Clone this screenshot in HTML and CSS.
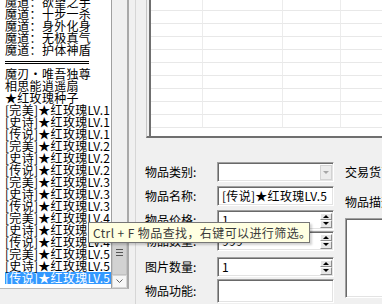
FILE: index.html
```html
<!DOCTYPE html>
<html lang="zh-CN">
<head>
<meta charset="utf-8">
<title>物品编辑</title>
<link rel="stylesheet" href="styles.css">
</head>
<body>
<div class="app">
  <div class="listbox">
    <div class="list">
      <ul class="items">
        <li>魔道：欲望之手</li>
        <li>魔道：十步一杀</li>
        <li>魔道：身外化身</li>
        <li>魔道：无极真气</li>
        <li>魔道：护体神盾</li>
        <li class="sep"><span></span></li>
        <li>魔刃・唯吾独尊</li>
        <li>相思能逍遥扇</li>
        <li>★红玫瑰种子</li>
        <li>[完美]★红玫瑰LV.1</li>
        <li>[史诗]★红玫瑰LV.1</li>
        <li>[传说]★红玫瑰LV.1</li>
        <li>[完美]★红玫瑰LV.2</li>
        <li>[史诗]★红玫瑰LV.2</li>
        <li>[传说]★红玫瑰LV.2</li>
        <li>[完美]★红玫瑰LV.3</li>
        <li>[史诗]★红玫瑰LV.3</li>
        <li>[传说]★红玫瑰LV.3</li>
        <li>[完美]★红玫瑰LV.4</li>
        <li>[史诗]★红玫瑰LV.4</li>
        <li>[传说]★红玫瑰LV.4</li>
        <li>[完美]★红玫瑰LV.5</li>
        <li>[史诗]★红玫瑰LV.5</li>
        <li class="selected">[传说]★红玫瑰LV.5</li>
      </ul>
    </div>
    <div class="vscroll">
      <div class="track"></div>
      <div class="thumb"><span class="grip"></span></div>
      <div class="arrow">
        <svg width="7" height="5" viewBox="0 0 7 5"><polyline points="0.5,0.5 3.5,3.5 6.5,0.5" fill="none" stroke="#606060" stroke-width="1"/></svg>
      </div>
    </div>
  </div>

  <div class="main">
    <div class="grid-wrap">
      <div class="grid">
        <table class="cells">
          <tr><td class="c1"></td><td class="c2"></td><td class="c3"></td><td class="c4"></td></tr>
          <tr><td></td><td></td><td></td><td></td></tr>
          <tr><td></td><td></td><td></td><td></td></tr>
          <tr><td></td><td></td><td></td><td></td></tr>
          <tr><td></td><td></td><td></td><td></td></tr>
          <tr><td></td><td></td><td></td><td></td></tr>
          <tr><td></td><td></td><td></td><td></td></tr>
          <tr><td></td><td></td><td></td><td></td></tr>
          <tr><td></td><td></td><td></td><td></td></tr>
          <tr><td></td><td></td><td></td><td></td></tr>
        </table>
      </div>
    </div>

    <div class="form">
      <div class="fields">
        <div class="row">
          <span class="label">物品类别:</span>
          <div class="field combo"><span class="drop"></span></div>
        </div>
        <div class="row">
          <span class="label">物品名称:</span>
          <div class="field"><span class="val">[传说]★红玫瑰LV.5</span></div>
        </div>
        <div class="row tight">
          <span class="label">物品价格:</span>
          <div class="field"><span class="val">1</span><span class="spin"><span class="up"></span><span class="down"></span></span></div>
        </div>
        <div class="row loose">
          <span class="label">物品数量:</span>
          <div class="field"><span class="val">999</span><span class="spin"><span class="up"></span><span class="down"></span></span></div>
        </div>
        <div class="row">
          <span class="label">图片数量:</span>
          <div class="field"><span class="val">1</span><span class="spin"><span class="up"></span><span class="down"></span></span></div>
        </div>
        <div class="row">
          <span class="label">物品功能:</span>
          <div class="field tall"></div>
        </div>
      </div>
      <div class="side">
        <div class="side-label first">交易货币:</div>
        <div class="side-label second">物品描述:</div>
        <div class="field memo"></div>
      </div>
    </div>
  </div>
</div>

<div class="tooltip">Ctrl + F 物品查找，右键可以进行筛选。</div>
</body>
</html>
```

FILE: styles.css
```css
html, body {
  margin: 0;
  padding: 0;
}

body {
  width: 382px;
  height: 304px;
  overflow: hidden;
  position: relative;
  background: #f0f0f0;
  font-family: "Noto Sans CJK SC", "Liberation Sans", sans-serif;
  font-size: 12px;
  color: #000;
}

.app {
  display: flex;
  height: 304px;
}

/* ---------- left list box ---------- */
.listbox {
  flex: 0 0 auto;
  width: 129px;
  height: 289px;
  box-sizing: border-box;
  display: flex;
  border-right: 2px solid #a9a9a9;
  border-bottom: 1px solid #b9b9b9;
  background: #fff;
}

.list {
  width: 111px;
  height: 100%;
  overflow: hidden;
  background: #fff;
}

.items {
  list-style: none;
  margin: -4px 0 0 0;
  padding: 0 0 0 5px;
}

.items li {
  height: 12px;
  line-height: 12px;
  white-space: nowrap;
  letter-spacing: 0.3px;
}

.items li.selected {
  background: #3399ff;
  color: #fff;
}

.items li.sep {
  display: flex;
  align-items: center;
}

.items li.sep span {
  display: block;
  width: 84px;
  height: 1px;
  border-top: 1px solid #000;
  border-bottom: 1px solid #000;
}

.vscroll {
  width: 16px;
  height: 100%;
  box-sizing: border-box;
  border-left: 1px solid #a0a0a0;
  background: #f0f0f0;
  display: flex;
  flex-direction: column;
}

.vscroll .track {
  flex: 1;
}

.vscroll .thumb {
  height: 45px;
  box-sizing: border-box;
  background: #d2d2d2;
  border: 1px solid #c2c2c2;
  display: flex;
  align-items: center;
  justify-content: center;
}

.vscroll .grip {
  display: block;
  width: 7px;
  height: 1px;
  margin-top: -6px;
  background: #555;
  box-shadow: 0 3px 0 #555, 0 6px 0 #555;
}

.vscroll .arrow {
  height: 13px;
  box-sizing: border-box;
  background: #f7f7f7;
  border: 1px solid #d6d6d6;
  display: flex;
  align-items: center;
  justify-content: center;
}

/* ---------- right side ---------- */
.main {
  flex: 1 1 auto;
  min-width: 0;
  margin-left: 6px;
  border-left: 1px solid #d6d6d6;
  display: flex;
  flex-direction: column;
}

.grid-wrap {
  height: 138px;
  margin-left: 10px;
  box-sizing: border-box;
  border-left: 1px solid #c6c6c6;
  border-bottom: 2px solid #6f6f6f;
  padding-left: 2px;
}

.grid {
  height: 136px;
  box-sizing: border-box;
  border-left: 2px solid #6f6f6f;
  background: #fff;
  overflow: hidden;
}

.cells {
  table-layout: fixed;
  border-collapse: separate;
  border-spacing: 0;
  width: 300px;
  margin-top: -2px;
}

.cells td {
  height: 12px;
  padding: 0;
  border-bottom: 1px solid #e8e8e8;
  border-right: 1px solid #ececec;
}

.cells td.c1 { width: 51px; }
.cells td.c2 { width: 79px; }
.cells td.c3 { width: 57px; }
.cells td.c4 { width: 112px; }

.form {
  display: flex;
  padding-top: 24px;
  padding-left: 9px;
}

.fields {
  flex: 0 0 auto;
  width: 190px;
}

.row {
  display: flex;
  align-items: center;
  height: 20px;
  margin-bottom: 4px;
}

.row.tight {
  margin-bottom: 1px;
}

.row.loose {
  margin-bottom: 6px;
}

.label {
  width: 72px;
  flex: 0 0 auto;
  white-space: nowrap;
  line-height: 14px;
}

.field {
  width: 117px;
  height: 20px;
  box-sizing: border-box;
  border: 1px solid;
  border-color: #a0a0a0 #fff #fff #a0a0a0;
  box-shadow: inset 1px 1px 0 #696969, inset -1px -1px 0 #e3e3e3;
  background: #fff;
  display: flex;
  align-items: center;
  padding-left: 4px;
}

.field .val {
  white-space: nowrap;
  line-height: 14px;
  letter-spacing: 0.3px;
}

.field.tall {
  height: 24px;
}

.drop {
  margin-left: auto;
  margin-right: 1px;
  width: 12px;
  height: 15px;
  box-sizing: border-box;
  background: #ececec;
  border: 1px solid #d3d3d3;
  display: flex;
  align-items: center;
  justify-content: center;
}

.drop::after {
  content: "";
  border-left: 3px solid transparent;
  border-right: 3px solid transparent;
  border-top: 3px solid #a6a6a6;
}

.spin {
  margin-left: auto;
  margin-right: 1px;
  width: 12px;
  height: 15px;
  display: flex;
  flex-direction: column;
}

.spin span {
  flex: 1;
  box-sizing: border-box;
  background: #e6e6e6;
  border: 1px solid;
  border-color: #fff #8c8c8c #8c8c8c #fff;
  display: flex;
  align-items: center;
  justify-content: center;
}

.spin .up::after {
  content: "";
  border-left: 3px solid transparent;
  border-right: 3px solid transparent;
  border-bottom: 3px solid #000;
}

.spin .down::after {
  content: "";
  border-left: 3px solid transparent;
  border-right: 3px solid transparent;
  border-top: 3px solid #000;
}

.side {
  flex: 0 0 auto;
  width: 60px;
  margin-left: 10px;
  display: flex;
  flex-direction: column;
}

.side-label {
  white-space: nowrap;
  line-height: 14px;
}

.side-label.first {
  height: 20px;
  line-height: 20px;
}

.side-label.second {
  margin-top: 13px;
}

.field.memo {
  margin-top: 9px;
  width: 60px;
  height: 80px;
}

/* ---------- tooltip overlay ---------- */
.tooltip {
  position: absolute;
  left: 88px;
  top: 222px;
  width: 222px;
  height: 21px;
  box-sizing: border-box;
  border: 1px solid #767676;
  background: #ffffe1;
  color: #3a3a3a;
  padding-left: 4px;
  line-height: 19px;
  white-space: nowrap;
  letter-spacing: 0.4px;
  box-shadow: 2px 2px 2px rgba(0, 0, 0, 0.18);
}
```
